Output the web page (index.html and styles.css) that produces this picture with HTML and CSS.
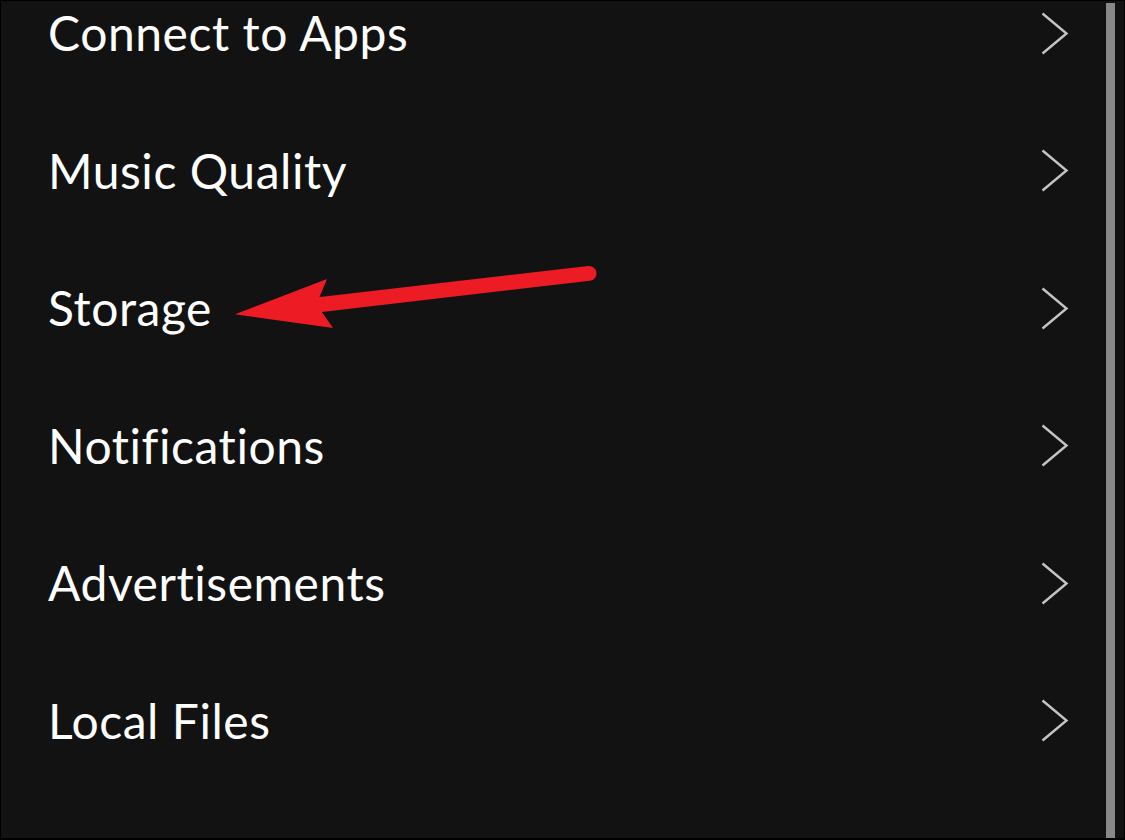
FILE: index.html
```html
<!DOCTYPE html>
<html>
<head>
<meta charset="utf-8">
<link rel="stylesheet" href="styles.css">
</head>
<body>
<div class="screen">
  <ul class="menu">
    <li class="row"><span class="label">Connect to Apps</span><svg class="chev" viewBox="0 0 28 44"><polyline points="1.5,1.5 25.5,21.5 1.5,41.5"/></svg></li>
    <li class="row"><span class="label">Music Quality</span><svg class="chev" viewBox="0 0 28 44"><polyline points="1.5,1.5 25.5,21.5 1.5,41.5"/></svg></li>
    <li class="row"><span class="label">Storage</span><svg class="chev" viewBox="0 0 28 44"><polyline points="1.5,1.5 25.5,21.5 1.5,41.5"/></svg></li>
    <li class="row"><span class="label">Notifications</span><svg class="chev" viewBox="0 0 28 44"><polyline points="1.5,1.5 25.5,21.5 1.5,41.5"/></svg></li>
    <li class="row"><span class="label">Advertisements</span><svg class="chev" viewBox="0 0 28 44"><polyline points="1.5,1.5 25.5,21.5 1.5,41.5"/></svg></li>
    <li class="row"><span class="label">Local Files</span><svg class="chev" viewBox="0 0 28 44"><polyline points="1.5,1.5 25.5,21.5 1.5,41.5"/></svg></li>
  </ul>
  <div class="scrollbar"></div>
  <svg class="annot" viewBox="0 0 1125 840" width="1125" height="840">
    <line x1="321" y1="304.5" x2="589" y2="273.4" stroke="#ed1c24" stroke-width="15" stroke-linecap="round"/>
    <polygon points="235,314.3 327,279 319.5,297 322,312.3 333,328" fill="#ed1c24"/>
  </svg>
</div>
</body>
</html>
```
FILE: styles.css
```css
html, body {
  margin: 0;
  padding: 0;
  background: #121212;
}
.screen {
  position: relative;
  width: 1125px;
  height: 840px;
  box-sizing: border-box;
  border: 1px solid #000;
  border-bottom-width: 2px;
  background: #121212;
  overflow: hidden;
  display: flex;
}
.menu {
  list-style: none;
  margin: -36.5px 0 0 0;
  padding: 0 0 0 47px;
  flex: 1;
}
.row {
  height: 137.5px;
  display: flex;
  align-items: center;
  justify-content: space-between;
  padding-right: 37px;
}
.label {
  font-family: "Lato", sans-serif;
  font-size: 48px;
  color: #ffffff;
  line-height: 1;
  letter-spacing: 0.55px;
}
.chev {
  width: 28px;
  height: 44px;
  fill: none;
  stroke: #c4c4c4;
  stroke-width: 2.4;
  margin-top: 1px;
}
.scrollbar {
  width: 9px;
  background: #888888;
  margin-right: 9px;
  margin-top: 2px;
}
.annot {
  position: absolute;
  left: -1px;
  top: -1px;
  pointer-events: none;
}
```
